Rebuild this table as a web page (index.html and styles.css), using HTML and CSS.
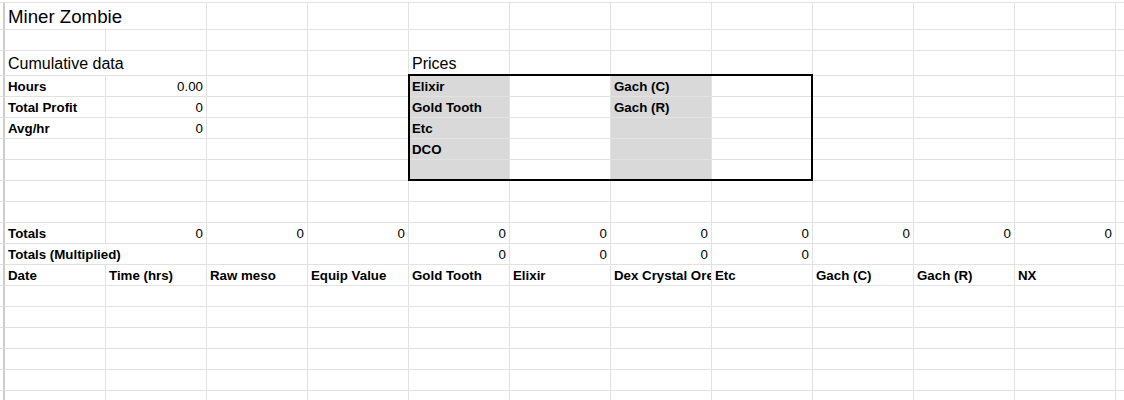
FILE: index.html
```html
<!DOCTYPE html>
<html>
<head>
<meta charset="utf-8">
<link rel="stylesheet" href="styles.css">
</head>
<body>
<div class="sheet">
  <!-- row 1 -->
  <div class="c s"></div><div class="c w2 title">Miner Zombie</div><div class="c"></div><div class="c"></div><div class="c"></div><div class="c"></div><div class="c"></div><div class="c"></div><div class="c"></div><div class="c"></div><div class="c"></div><div class="c"></div>
  <!-- row 2 -->
  <div class="c s"></div><div class="c"></div><div class="c"></div><div class="c"></div><div class="c"></div><div class="c"></div><div class="c"></div><div class="c"></div><div class="c"></div><div class="c"></div><div class="c"></div><div class="c"></div><div class="c"></div>
  <!-- row 3 -->
  <div class="c s"></div><div class="c w2 h2">Cumulative data</div><div class="c"></div><div class="c"></div><div class="c h2">Prices</div><div class="c"></div><div class="c"></div><div class="c"></div><div class="c"></div><div class="c"></div><div class="c"></div><div class="c"></div>
  <!-- row 4 -->
  <div class="c s"></div><div class="c b">Hours</div><div class="c n">0.00</div><div class="c"></div><div class="c"></div><div class="c g b">Elixir</div><div class="c"></div><div class="c g b">Gach (C)</div><div class="c"></div><div class="c"></div><div class="c"></div><div class="c"></div><div class="c"></div>
  <!-- row 5 -->
  <div class="c s"></div><div class="c b">Total Profit</div><div class="c n">0</div><div class="c"></div><div class="c"></div><div class="c g b">Gold Tooth</div><div class="c"></div><div class="c g b">Gach (R)</div><div class="c"></div><div class="c"></div><div class="c"></div><div class="c"></div><div class="c"></div>
  <!-- row 6 -->
  <div class="c s"></div><div class="c b">Avg/hr</div><div class="c n">0</div><div class="c"></div><div class="c"></div><div class="c g b">Etc</div><div class="c"></div><div class="c g"></div><div class="c"></div><div class="c"></div><div class="c"></div><div class="c"></div><div class="c"></div>
  <!-- row 7 -->
  <div class="c s"></div><div class="c"></div><div class="c"></div><div class="c"></div><div class="c"></div><div class="c g b">DCO</div><div class="c"></div><div class="c g"></div><div class="c"></div><div class="c"></div><div class="c"></div><div class="c"></div><div class="c"></div>
  <!-- row 8 -->
  <div class="c s"></div><div class="c"></div><div class="c"></div><div class="c"></div><div class="c"></div><div class="c g"></div><div class="c"></div><div class="c g"></div><div class="c"></div><div class="c"></div><div class="c"></div><div class="c"></div><div class="c"></div>
  <!-- row 9 -->
  <div class="c s"></div><div class="c"></div><div class="c"></div><div class="c"></div><div class="c"></div><div class="c"></div><div class="c"></div><div class="c"></div><div class="c"></div><div class="c"></div><div class="c"></div><div class="c"></div><div class="c"></div>
  <!-- row 10 -->
  <div class="c s"></div><div class="c"></div><div class="c"></div><div class="c"></div><div class="c"></div><div class="c"></div><div class="c"></div><div class="c"></div><div class="c"></div><div class="c"></div><div class="c"></div><div class="c"></div><div class="c"></div>
  <!-- row 11 -->
  <div class="c s"></div><div class="c b">Totals</div><div class="c n">0</div><div class="c n">0</div><div class="c n">0</div><div class="c n">0</div><div class="c n">0</div><div class="c n">0</div><div class="c n">0</div><div class="c n">0</div><div class="c n">0</div><div class="c n">0</div><div class="c"></div>
  <!-- row 12 -->
  <div class="c s"></div><div class="c w2 b">Totals (Multiplied)</div><div class="c"></div><div class="c"></div><div class="c n">0</div><div class="c n">0</div><div class="c n">0</div><div class="c n">0</div><div class="c"></div><div class="c"></div><div class="c"></div><div class="c"></div>
  <!-- row 13 -->
  <div class="c s"></div><div class="c b">Date</div><div class="c b">Time (hrs)</div><div class="c b">Raw meso</div><div class="c b">Equip Value</div><div class="c b">Gold Tooth</div><div class="c b">Elixir</div><div class="c b">Dex Crystal Ore</div><div class="c b">Etc</div><div class="c b">Gach (C)</div><div class="c b">Gach (R)</div><div class="c b">NX</div><div class="c"></div>
  <!-- rows 14-19 -->
  <div class="c s"></div><div class="c"></div><div class="c"></div><div class="c"></div><div class="c"></div><div class="c"></div><div class="c"></div><div class="c"></div><div class="c"></div><div class="c"></div><div class="c"></div><div class="c"></div><div class="c"></div>
  <div class="c s"></div><div class="c"></div><div class="c"></div><div class="c"></div><div class="c"></div><div class="c"></div><div class="c"></div><div class="c"></div><div class="c"></div><div class="c"></div><div class="c"></div><div class="c"></div><div class="c"></div>
  <div class="c s"></div><div class="c"></div><div class="c"></div><div class="c"></div><div class="c"></div><div class="c"></div><div class="c"></div><div class="c"></div><div class="c"></div><div class="c"></div><div class="c"></div><div class="c"></div><div class="c"></div>
  <div class="c s"></div><div class="c"></div><div class="c"></div><div class="c"></div><div class="c"></div><div class="c"></div><div class="c"></div><div class="c"></div><div class="c"></div><div class="c"></div><div class="c"></div><div class="c"></div><div class="c"></div>
  <div class="c s"></div><div class="c"></div><div class="c"></div><div class="c"></div><div class="c"></div><div class="c"></div><div class="c"></div><div class="c"></div><div class="c"></div><div class="c"></div><div class="c"></div><div class="c"></div><div class="c"></div>
  <div class="c s"></div><div class="c"></div><div class="c"></div><div class="c"></div><div class="c"></div><div class="c"></div><div class="c"></div><div class="c"></div><div class="c"></div><div class="c"></div><div class="c"></div><div class="c"></div><div class="c"></div>
  <!-- medium border drawn over the prices block -->
  <div class="box"></div>
</div>
</body>
</html>
```

FILE: styles.css
```css
* { box-sizing: border-box; }

body {
  margin: 0;
  background: #fff;
  font-family: "Liberation Sans", Arial, sans-serif;
  font-size: 13.3px;
  color: #000;
  overflow: hidden;
}

.sheet {
  position: relative;
  display: grid;
  grid-template-columns: 5px repeat(11, 101px) 9px;
  grid-template-rows: 27px 21px 25px repeat(16, 21px);
  width: 1124px;
  margin-top: 2px;
  border-top: 1px solid #e2e2e2;
  overflow: hidden;
}

.c {
  display: flex;
  align-items: flex-end;
  min-width: 0;
  padding: 0 3px 2px 3px;
  line-height: 15px;
  white-space: nowrap;
  overflow: hidden;
  border-right: 1px solid #e2e2e2;
  border-bottom: 1px solid #e2e2e2;
}

.s { border-right: 2px solid #cdcdcd; padding: 0; }

.b { font-weight: bold; }

.n { justify-content: flex-end; }

.g { background: #d9d9d9; }

.w2 { grid-column: span 2; }

.title { font-size: 18.67px; line-height: 21px; }

.h2 { font-size: 16px; line-height: 18px; }

.box {
  position: absolute;
  grid-column: 6 / 10;
  grid-row: 4 / 9;
  top: -2px;
  left: -1px;
  right: 0;
  bottom: 0;
  border: 2px solid #000;
}
```
